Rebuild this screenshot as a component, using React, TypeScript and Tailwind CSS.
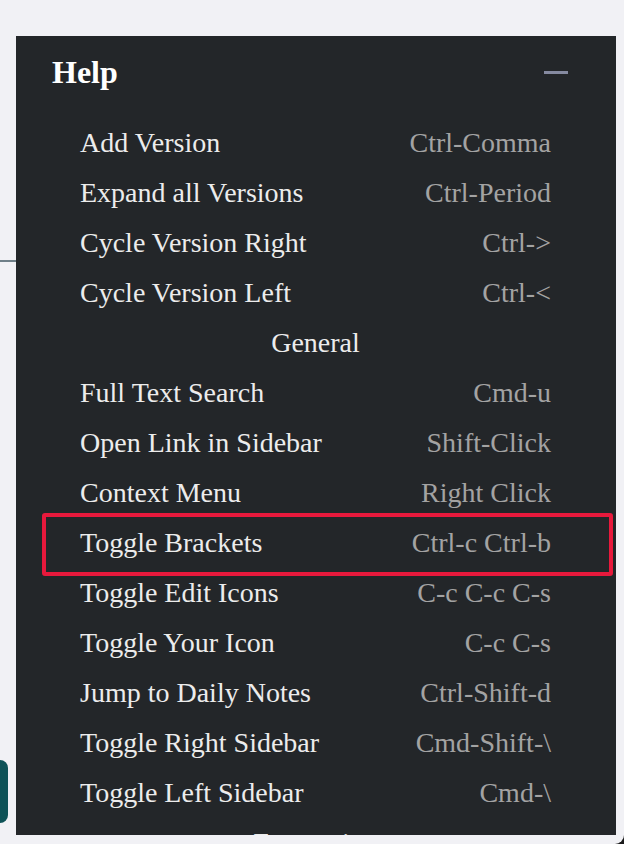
const rows: Array<{ label: string; keys?: string; header?: boolean }> = [
  { label: 'Add Version', keys: 'Ctrl-Comma' },
  { label: 'Expand all Versions', keys: 'Ctrl-Period' },
  { label: 'Cycle Version Right', keys: 'Ctrl->' },
  { label: 'Cycle Version Left', keys: 'Ctrl-<' },
  { label: 'General', header: true },
  { label: 'Full Text Search', keys: 'Cmd-u' },
  { label: 'Open Link in Sidebar', keys: 'Shift-Click' },
  { label: 'Context Menu', keys: 'Right Click' },
  { label: 'Toggle Brackets', keys: 'Ctrl-c Ctrl-b' },
  { label: 'Toggle Edit Icons', keys: 'C-c C-c C-s' },
  { label: 'Toggle Your Icon', keys: 'C-c C-s' },
  { label: 'Jump to Daily Notes', keys: 'Ctrl-Shift-d' },
  { label: 'Toggle Right Sidebar', keys: 'Cmd-Shift-\\' },
  { label: 'Toggle Left Sidebar', keys: 'Cmd-\\' },
  { label: 'Formatting', header: true },
];

export default function App() {
  return (
    <div className="relative flex h-[844px] w-[624px] overflow-hidden bg-[#f1f1f5] font-['Liberation_Serif',serif]">
      {/* left edge of the page behind the panel */}
      <div className="flex w-4 shrink-0 flex-col">
        <div className="mt-[260px] h-[2px] w-4 bg-[#6f7f88]" />
        <div className="mt-[498px] h-[63px] w-2 rounded-r-lg bg-[#0e5257]" />
      </div>

      <div className="mt-9 flex h-[799px] w-[600px] shrink-0 flex-col overflow-hidden bg-[#232629]">
        <div className="flex h-[72px] shrink-0 items-center justify-between pl-9 pr-12">
          <h2 className="text-[32px] font-bold text-white">Help</h2>
          <div className="h-[3px] w-6 bg-[#858aa0]" />
        </div>

        <div className="pt-[10px]">
          {rows.map((r) =>
            r.header ? (
              <div
                key={r.label}
                className="flex h-[50px] items-center justify-center pl-16 pr-[65px] text-[28px] text-[#ececec]"
              >
                {r.label}
              </div>
            ) : (
              <div
                key={r.label}
                className="relative flex h-[50px] items-center justify-between pl-16 pr-[65px] text-[28px]"
              >
                <span className="text-[#ececec]">{r.label}</span>
                <span className="text-[#a3a3a3]">{r.keys}</span>
                {r.label === 'Toggle Brackets' && (
                  <div className="absolute -top-[5px] -bottom-2 left-[26px] right-[3px] rounded-[3px] border-4 border-[#e8193c]" />
                )}
              </div>
            )
          )}
        </div>
      </div>

      <div className="w-2 shrink-0" />
      <div className="absolute bottom-0 right-0 h-[9px] w-[9px] bg-[#1b1b1b]">
        <div className="h-full w-full rounded-br-[9px] bg-[#f1f1f5]" />
      </div>
    </div>
  );
}
